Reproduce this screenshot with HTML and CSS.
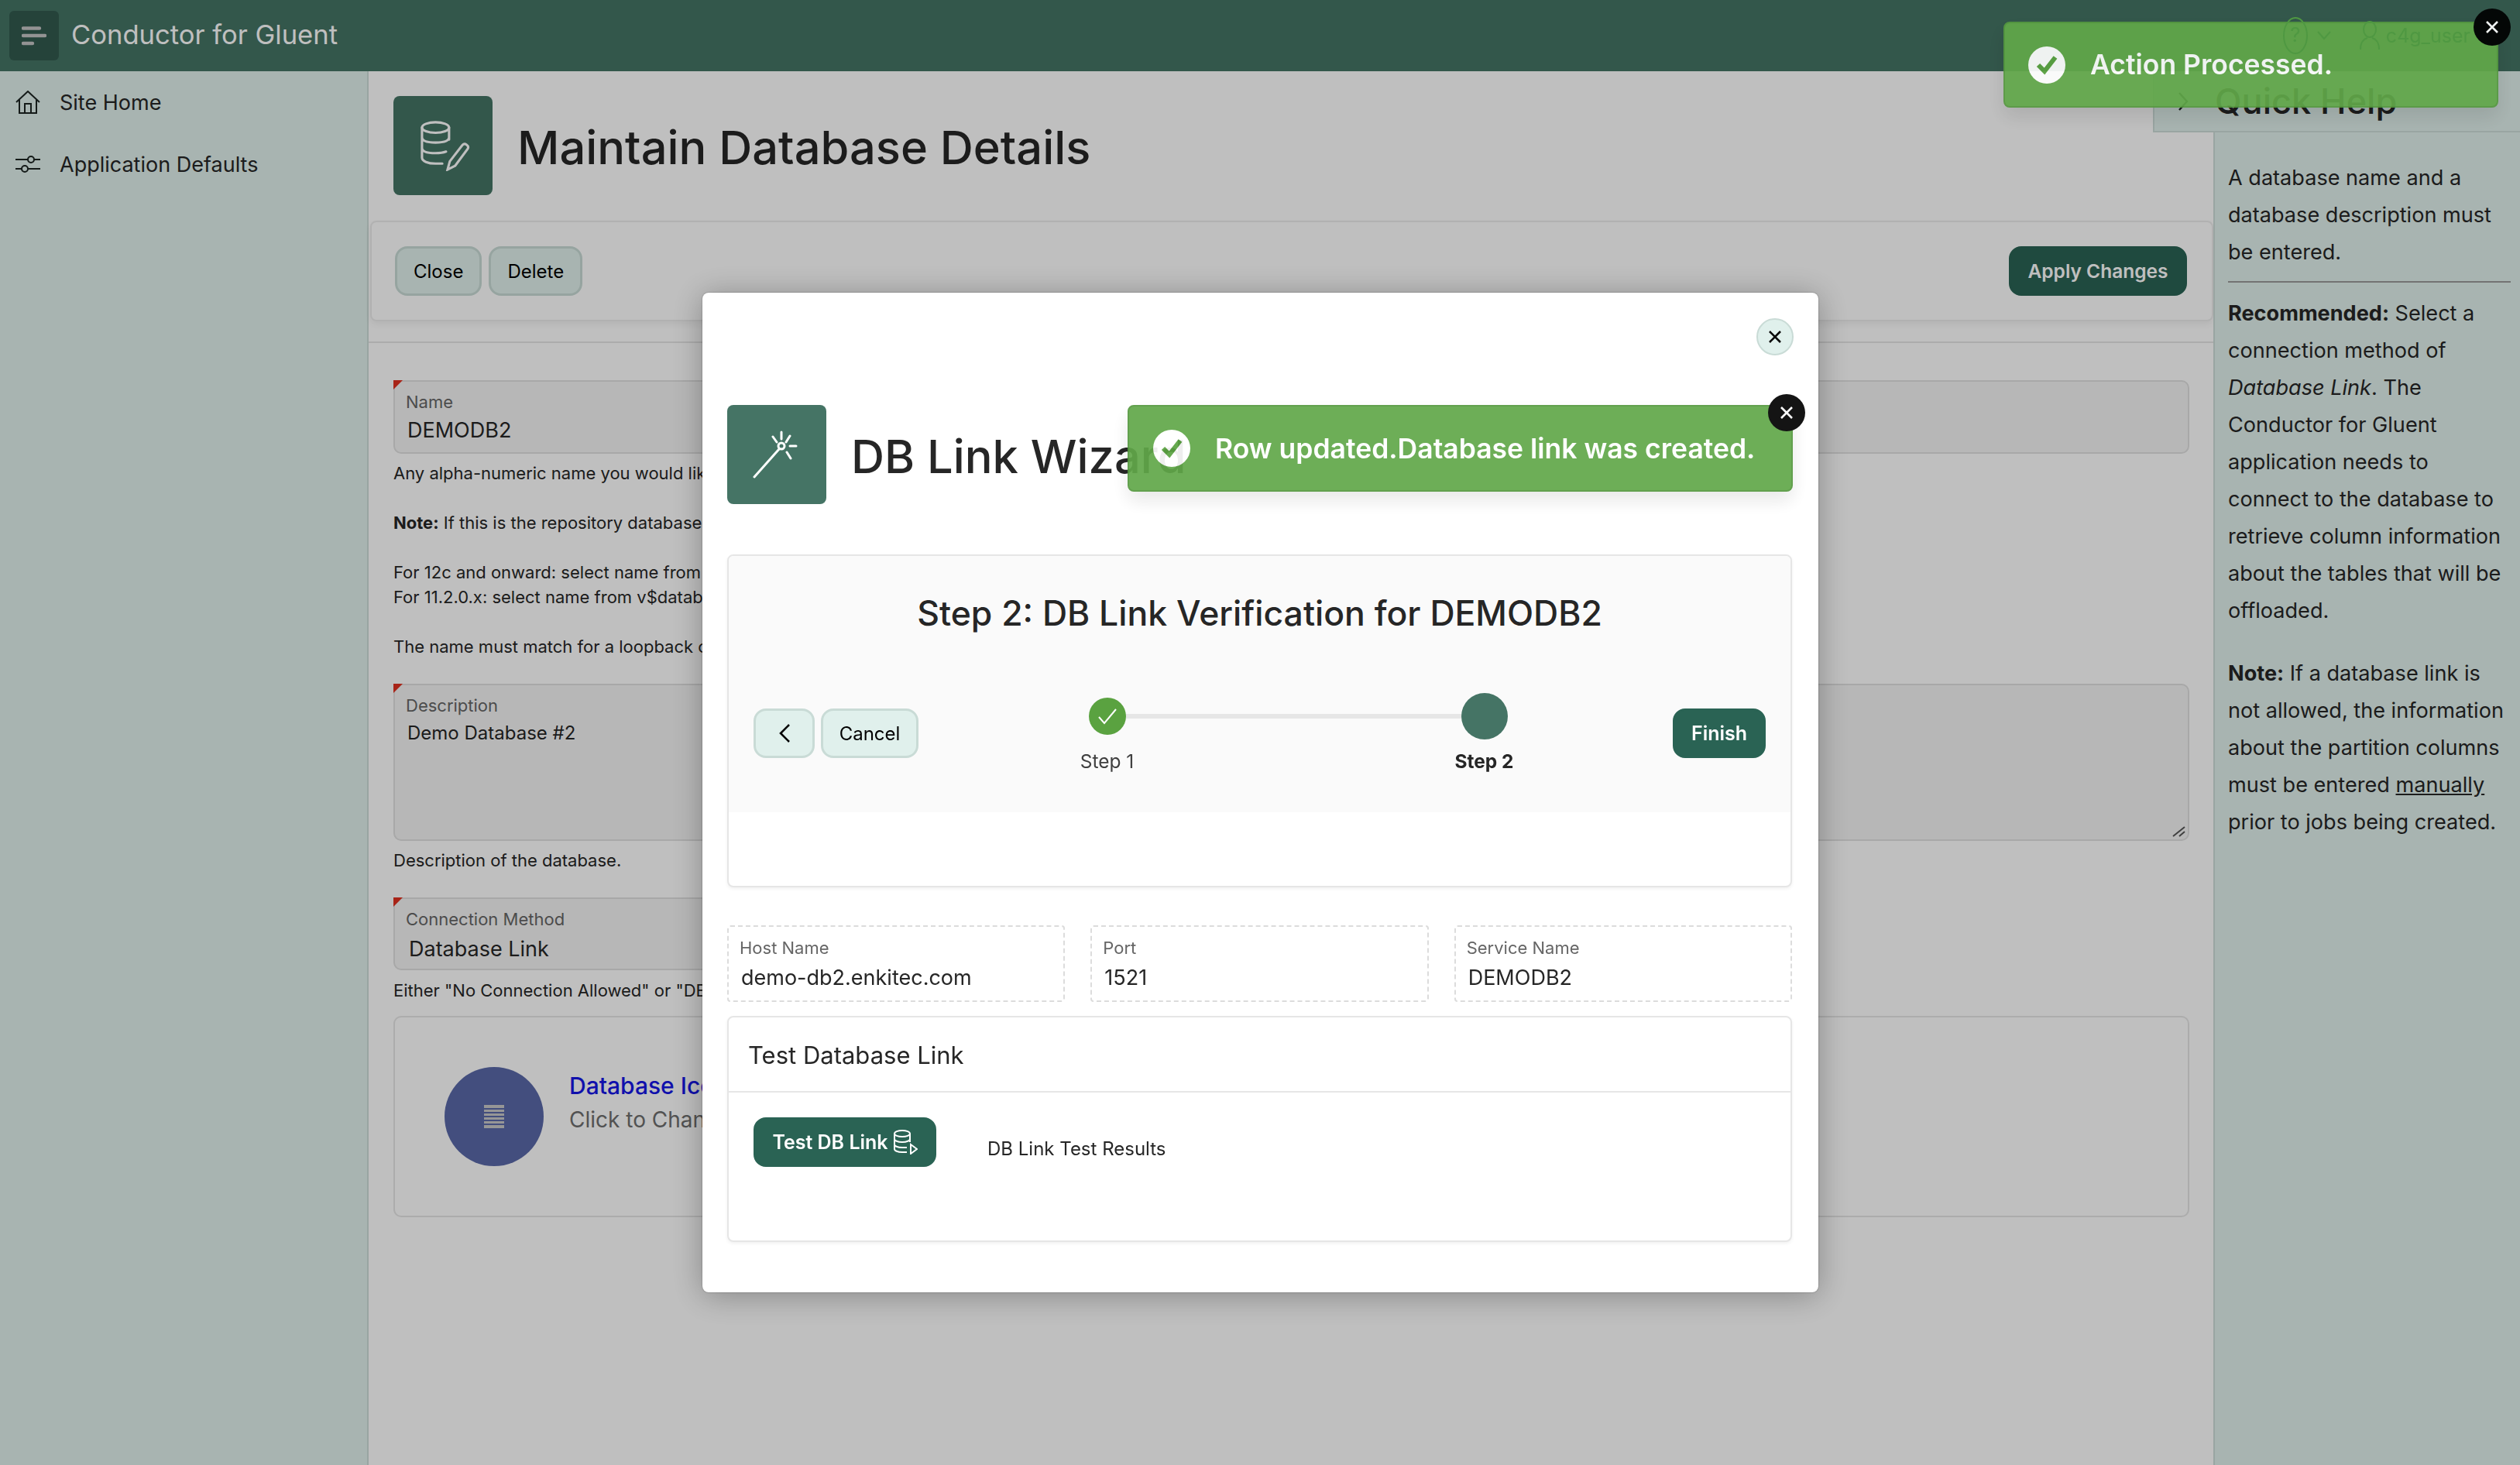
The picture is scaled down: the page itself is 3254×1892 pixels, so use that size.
FILE: index.html
```html
<!DOCTYPE html>
<html lang="en">
<head>
<meta charset="utf-8">
<title>Maintain Database Details</title>
<link rel="stylesheet" href="styles.css">
</head>
<body>
<div class="app">
  <header class="topbar">
    <button class="burger" aria-label="Menu"><svg width="32" height="32" viewBox="0 0 32 32"><path d="M2 6.5h21M2 16h28M2 26h12" stroke="#c4c4c4" stroke-width="4.4" stroke-linecap="round" fill="none"/></svg></button>
    <div class="brand">Conductor for Gluent</div>
    <div class="topbar-right">
      <svg class="help-ico" width="34" height="50" viewBox="0 0 34 50" fill="none" stroke="#4f9842" stroke-width="2"><ellipse cx="17" cy="25" rx="15" ry="23"/><text x="17" y="33" text-anchor="middle" fill="#4f9842" stroke="none" class="help-q">?</text></svg>
      <svg class="help-caret" width="20" height="14" viewBox="0 0 20 14" fill="none" stroke="#4f9842" stroke-width="2"><path d="M2 2l8 9 8-9"/></svg>
      <svg class="user-ico" width="26" height="38" viewBox="0 0 26 38" fill="none" stroke="#4f9842" stroke-width="2"><ellipse cx="13" cy="11" rx="8" ry="10"/><path d="M1 37c0-10 5-14 9-15M25 37c0-10-5-14-9-15"/></svg>
      <span class="user-name">c4g_user</span>
    </div>
  </header>
  <div class="layout">
    <nav class="sidebar">
      <a class="nav-item"><svg width="32" height="30" viewBox="0 0 32 30" fill="none" stroke="#1c2422" stroke-width="2"><path d="M1 15L16 1l15 14M5 12v17h22V12M12 29V17h8v12"/></svg><span>Site Home</span></a>
      <a class="nav-item"><svg width="32" height="26" viewBox="0 0 32 26" fill="none" stroke="#1c2422" stroke-width="2"><path d="M0 7h16M24 7h8M0 19h8M16 19h16"/><circle cx="20" cy="7" r="4"/><circle cx="12" cy="19" r="4"/></svg><span>Application Defaults</span></a>
    </nav>
    <main class="content">
      <div class="page-head">
        <div class="tile tile-dark">
          <svg class="tile-ico" width="66" height="66" viewBox="0 0 68 66" fill="none" stroke="#fff" stroke-width="3.2" stroke-linecap="round"><ellipse cx="21" cy="9" rx="18" ry="7"/><path d="M3 9v40c0 5 8 8 18 8h9M39 9v16M3 22c0 5 8 7 18 7s18-2 18-7M3 36c0 5 8 7 18 7 5 0 10-.5 14-2"/><path d="M47 60l-10 5 3-11 17-22c3-3 9 1 7 5z"/></svg>
        </div>
        <h1 class="page-title">Maintain Database Details</h1>
      </div>
      <div class="toolbar">
        <button class="btn">Close</button>
        <button class="btn">Delete</button>
        <span class="spacer"></span>
        <button class="btn btn-primary">Apply Changes</button>
      </div>
      <div class="form">
        <div class="field field-name">
          <label>Name</label>
          <div class="value">DEMODB2</div>
        </div>
        <div class="help-block">Any alpha-numeric name you would like to use.<br><br><b>Note:</b> If this is the repository database<br><br>For 12c and onward: select name from v$pdbs<br>For 11.2.0.x: select name from v$database<br><br>The name must match for a loopback connection.</div>
        <div class="field field-desc">
          <label>Description</label>
          <div class="value">Demo Database #2</div>
          <svg class="grip" width="18" height="14" viewBox="0 0 18 14" stroke="#555" stroke-width="2"><path d="M2 13L17 1M10 13l7-6"/></svg>
        </div>
        <div class="help-block help-short">Description of the database.</div>
        <div class="field field-conn">
          <label>Connection Method</label>
          <div class="value value-sel">Database Link</div>
        </div>
        <div class="help-block help-tight">Either "No Connection Allowed" or "DB Link".</div>
        <div class="icon-card">
          <div class="db-circle"><svg width="26" height="30" viewBox="0 0 26 30" fill="#c8c8c8"><path d="M0 0h26v4H0zM0 6h26v3H0zM0 11h26v3H0zM0 16h26v3H0zM0 21h26v3H0zM0 26h26v4H0z"/></svg></div>
          <div class="icon-text">
            <a class="icon-link">Database Icon</a>
            <div class="icon-sub">Click to Change</div>
          </div>
        </div>
      </div>
    </main>
    <aside class="quick">
      <div class="quick-head">
        <svg width="14" height="26" viewBox="0 0 14 26" fill="none" stroke="#1c2422" stroke-width="2.4"><path d="M2 2l10 11L2 24"/></svg>
        <h2>Quick Help</h2>
      </div>
      <div class="quick-body">
        <p>A database name and a database description must be entered.</p>
        <hr>
        <p><b>Recommended:</b> Select a connection method of <i>Database Link</i>. The Conductor for Gluent application needs to connect to the database to retrieve column information about the tables that will be offloaded.</p>
        <p class="quick-note"><b>Note:</b> If a database link is not allowed, the information about the partition columns must be entered <u>manually</u> prior to jobs being created.</p>
      </div>
    </aside>
  </div>
</div>

<div class="scrim"></div>

<section class="modal">
  <button class="modal-close" aria-label="Close"><svg width="18" height="18" viewBox="0 0 18 18" stroke="#000" stroke-width="2.6"><path d="M2 2l14 14M16 2L2 16"/></svg></button>
  <div class="wiz-head">
    <div class="tile tile-mid">
      <svg width="62" height="62" viewBox="0 0 62 62" fill="none" stroke="#fff" stroke-width="3" stroke-linecap="round"><path d="M2 60l32-36"/><circle cx="37" cy="20" r="4"/><path d="M37 2v9M48 20h8M26 8l5 7M48 7l-5 8M44 28l5 8"/></svg>
    </div>
    <h1 class="page-title">DB Link Wizard</h1>
  </div>
  <div class="wiz-card">
    <div class="wiz-top">
      <h2 class="wiz-title">Step 2: DB Link Verification for DEMODB2</h2>
      <div class="wiz-row">
        <div class="wiz-btns">
          <button class="btn btn-light btn-back"><svg width="16" height="26" viewBox="0 0 16 26" fill="none" stroke="#000" stroke-width="2.6"><path d="M14 2L3 13l11 11"/></svg></button>
          <button class="btn btn-light btn-cancel">Cancel</button>
        </div>
        <div class="stepper">
          <div class="step step-done">
            <div class="step-slot"><span class="dot dot-done"><svg width="26" height="22" viewBox="0 0 26 22" fill="none" stroke="#fff" stroke-width="2"><path d="M2 12l7 8L24 2"/></svg></span></div>
            <div class="step-label">Step 1</div>
          </div>
          <div class="step">
            <div class="step-slot"><span class="dot dot-active"></span></div>
            <div class="step-label step-label-on">Step 2</div>
          </div>
        </div>
        <button class="btn btn-green">Finish</button>
      </div>
    </div>
  </div>
  <div class="ro-row">
    <div class="ro-field"><label>Host Name</label><div class="value">demo-db2.enkitec.com</div></div>
    <div class="ro-field"><label>Port</label><div class="value">1521</div></div>
    <div class="ro-field"><label>Service Name</label><div class="value">DEMODB2</div></div>
  </div>
  <div class="test-card">
    <div class="test-head">Test Database Link</div>
    <div class="test-body">
      <button class="btn btn-green btn-test">Test DB Link
        <svg width="32" height="32" viewBox="0 0 32 32" fill="none" stroke="#fff" stroke-width="2"><ellipse cx="12" cy="5" rx="10" ry="4"/><path d="M2 5v20c0 2 4 4 10 4h6M22 5v11M2 12c0 2 4 4 10 4s10-2 10-4M2 19c0 2 4 4 10 4h6"/><path d="M23 19l8 6-8 6z"/></svg>
      </button>
      <span class="test-result">DB Link Test Results</span>
    </div>
  </div>
</section>

<div class="toast toast-top">
  <span class="toast-check"><svg width="30" height="26" viewBox="0 0 30 26" fill="none" stroke="#5aa240" stroke-width="6"><path d="M4 13l8 8L26 3"/></svg></span>
  <span class="toast-text">Action Processed.</span>
  <button class="toast-close" aria-label="Dismiss"><svg width="18" height="18" viewBox="0 0 18 18" stroke="#fff" stroke-width="2.6"><path d="M2 2l14 14M16 2L2 16"/></svg></button>
</div>
<div class="toast toast-modal">
  <span class="toast-check"><svg width="30" height="26" viewBox="0 0 30 26" fill="none" stroke="#5aa240" stroke-width="6"><path d="M4 13l8 8L26 3"/></svg></span>
  <span class="toast-text">Row updated.Database link was created.</span>
  <button class="toast-close" aria-label="Dismiss"><svg width="18" height="18" viewBox="0 0 18 18" stroke="#fff" stroke-width="2.6"><path d="M2 2l14 14M16 2L2 16"/></svg></button>
</div>
</body>
</html>
```
FILE: styles.css
```css
* { box-sizing: border-box; }
html, body { margin: 0; height: 100%; }
body { font-family: Inter, "Noto Sans", sans-serif; color: #262626; background: #fff; overflow: hidden; }
button { font-family: inherit; }
h1, h2, p { margin: 0; font-weight: 400; }

.app { display: flex; flex-direction: column; height: 1892px; }

.topbar { height: 92px; flex: none; display: flex; align-items: center; padding-left: 12px; background: #457465; color: #fff; }
.burger { width: 64px; height: 64px; padding: 0 0 0 16px; border: 0; border-radius: 6px; background: #325a4e; display: flex; align-items: center; }
.brand { margin: -4px 0 0 16px; font-size: 34.6px; }
.topbar-right { position: relative; z-index: 4; margin-left: auto; display: flex; align-items: center; margin-right: 64px; }
.help-q { font-size: 26px; font-family: Inter, sans-serif; }
.help-caret { margin-left: 10px; }
.user-ico { margin-left: 36px; }
.user-name { margin-left: 8px; font-size: 25px; color: #4f9842; }

.layout { flex: 1; display: flex; min-height: 0; }

.sidebar { width: 476px; flex: none; padding-top: 16px; background: #e0f0ec; border-right: 2px solid #cddcd8; }
.nav-item { height: 48px; margin-bottom: 32px; padding-left: 20px; display: flex; align-items: center; gap: 25px; font-size: 27px; color: #262626; }

.content { flex: 1; min-width: 0; display: flex; flex-direction: column; background: #fff; }
.page-head { display: flex; align-items: center; gap: 32px; padding: 32px 0 0 32px; }
.tile { width: 128px; height: 128px; flex: none; display: flex; align-items: center; justify-content: center; border-radius: 8px; }
.tile-dark { background: #457465; }
.tile-mid { background: #457465; }
.tile-ico { margin-left: 6px; }
.page-title { position: relative; top: 2px; font-size: 59.6px; line-height: 72px; font-weight: 450; color: #262626; }

.toolbar { height: 130px; margin: 33px 0 0 2px; padding: 0 32px 0 30px; display: flex; align-items: center; gap: 9px; background: #fff; border: 2px solid #ededed; border-radius: 8px; box-shadow: 0 4px 8px rgba(0,0,0,.06); }
.spacer { flex: 1; }

.btn { height: 64px; padding: 0 21px; font-size: 24px; font-weight: 400; color: #000; background: #e0f0ec; border: 3px solid #c9dbd6; border-radius: 16px; }
.btn-primary { width: 230px; padding: 0; font-size: 24.5px; font-weight: 600; color: #fff; background: #2a6354; border-color: #2a6354; }
.btn-light { background: #e0f0ec; }
.btn-back { width: 79px; padding: 0; display: flex; align-items: center; justify-content: center; }
.btn-cancel { width: 126px; padding: 0; }
.btn-green { font-size: 25px; font-weight: 600; color: #fff; background: #2a6354; border-color: #2a6354; }

.form { margin-top: 26px; padding: 48px 31px 0 32px; border-top: 2px solid #e6e6e6; }
.field { position: relative; padding: 12px 15px 0 14px; background: #f5f5f5; border: 2px solid #e0e0e0; border-radius: 10px; }
.field::before { content: ""; position: absolute; left: -2px; top: -2px; border-top: 12px solid #e03020; border-right: 12px solid transparent; border-bottom: 0; }
.field label { display: block; font-size: 22px; line-height: 28px; color: #666; }
.field .value { margin-top: 5px; padding-left: 2px; font-size: 27px; line-height: 36px; color: #262626; }
.field-name { height: 95px; }
.field-desc { height: 203px; }
.field-desc .value { margin-top: 4px; font-size: 24px; }
.field-conn { width: 1400px; height: 94px; }
.field-conn .value { margin-top: 7px; padding-left: 4px; }
.grip { position: absolute; right: 3px; bottom: 3px; }

.help-block { margin-top: 9px; font-size: 22px; line-height: 32px; color: #262626; white-space: nowrap; }
.help-block b { font-weight: 700; }
.help-block + .field { margin-top: 32px; }
.help-short { margin-top: 9px; }
.help-short + .field { margin-top: 32px; }
.help-tight { margin-top: 10px; }

.icon-card { height: 260px; margin-top: 17px; padding-left: 64px; display: flex; align-items: center; background: #fff; border: 2px solid #e6e6e6; border-radius: 10px; }
.db-circle { width: 128px; height: 128px; display: flex; align-items: center; justify-content: center; border-radius: 50%; background: #5a69a8; }
.icon-text { margin-left: 33px; padding-bottom: 36px; }
.icon-link { display: block; font-size: 30px; line-height: 44px; font-weight: 500; color: #1616e6; }
.icon-sub { font-size: 28px; line-height: 44px; color: #6e6e6e; }

.quick { width: 396px; flex: none; background: #e0f0ec; border-left: 2px solid #cddcd8; }
.quick-head { height: 79px; margin-left: -80px; padding-left: 30px; display: flex; align-items: center; gap: 34px; background: #e0f0ec; border-left: 2px solid #cddcd8; border-bottom: 2px solid #cddcd8; }
.quick-head h2 { font-size: 45px; font-weight: 500; color: #262626; }
.quick-body { padding: 35px 12px 0 17px; font-size: 27.1px; line-height: 48px; color: #262626; }
.quick-body hr { height: 2px; margin: 13px 0 16px; border: 0; background: #9a9a9a; }
.quick-note { margin-top: 33px; }

.scrim { position: fixed; z-index: 1; inset: 0; background: rgba(0,0,0,.25); }

.modal { position: fixed; z-index: 2; left: 907px; top: 378px; width: 1441px; height: 1291px; padding: 33px 34px 0 32px; display: flex; flex-direction: column; background: #fff; border-radius: 8px; box-shadow: 0 0 2px rgba(0,0,0,.4), 0 4px 40px rgba(0,0,0,.3); }
.modal-close { align-self: flex-end; width: 48px; height: 48px; margin-right: -2px; padding: 0; display: flex; align-items: center; justify-content: center; background: #e0f0ec; border: 2px solid #c9dbd6; border-radius: 50%; }
.wiz-head { margin-top: 64px; display: flex; align-items: center; gap: 32px; }

.wiz-card { height: 430px; margin-top: 65px; background: #fff; border: 2px solid #e6e6e6; border-radius: 8px; box-shadow: 0 2px 4px rgba(0,0,0,.06); overflow: hidden; }
.wiz-top { height: 331px; padding: 44px 32px 0 32px; background: #fafafa; }
.wiz-title { font-size: 44.5px; line-height: 60px; font-weight: 450; text-align: center; color: #262626; }
.wiz-row { margin-top: 73px; display: flex; align-items: flex-start; }
.wiz-btns { margin-top: 20px; display: flex; gap: 8px; }
.wiz-row > .btn-green { margin-top: 20px; width: 120px; padding: 0; }

.stepper { flex: 1; display: flex; }
.step { position: relative; flex: 1; display: flex; flex-direction: column; align-items: center; }
.step-done::after { content: ""; position: absolute; left: 50%; top: 27px; width: 100%; height: 6px; background: #e6e6e6; }
.step-slot { position: relative; z-index: 1; height: 60px; display: flex; align-items: center; }
.dot { display: flex; align-items: center; justify-content: center; border-radius: 50%; }
.dot-done { width: 48px; height: 48px; background: #5aa240; }
.dot-active { width: 60px; height: 60px; background: #457465; }
.step-label { margin-top: 12px; font-size: 24.5px; line-height: 32px; color: #404040; }
.step-label-on { font-weight: 700; color: #262626; }

.ro-row { margin-top: 49px; display: flex; gap: 33px; }
.ro-field { flex: 1; height: 99px; padding: 13px 14px 0 14px; border: 2px dashed #dcdcdc; border-radius: 4px; }
.ro-field label { display: block; font-size: 22px; line-height: 28px; color: #666; }
.ro-field .value { margin-top: 7px; padding-left: 2px; font-size: 27px; line-height: 36px; color: #262626; }

.test-card { height: 292px; margin-top: 18px; background: #fff; border: 2px solid #e6e6e6; border-radius: 8px; box-shadow: 0 2px 4px rgba(0,0,0,.06); }
.test-head { height: 97px; padding: 2px 0 0 25px; display: flex; align-items: center; font-size: 31px; color: #262626; border-bottom: 2px solid #e6e6e6; }
.test-body { padding: 32px 0 0 32px; display: flex; align-items: flex-start; }
.btn-test { width: 236px; padding: 0; display: flex; align-items: center; justify-content: center; gap: 6px; }
.test-result { margin: 27px 0 0 66px; font-size: 24px; line-height: 28px; }

.toast { position: fixed; z-index: 3; display: flex; align-items: center; color: #fff; background: #61a849; border: 2px solid #55983f; border-radius: 8px; opacity: .92; box-shadow: 0 12px 24px rgba(0,0,0,.1); }
.toast-top { left: 2587px; top: 28px; width: 639px; height: 111px; padding: 0 0 0 30px; }
.toast-modal { left: 1456px; top: 523px; width: 859px; height: 112px; padding: 0 0 0 31px; }
.toast-check { width: 48px; height: 48px; flex: none; display: flex; align-items: center; justify-content: center; border-radius: 50%; background: #fff; }
.toast-text { margin-left: 32px; font-size: 35.5px; font-weight: 600; }
.toast-close { position: absolute; width: 48px; height: 48px; padding: 0; display: flex; align-items: center; justify-content: center; background: #000; border: 0; border-radius: 50%; }
.toast-top .toast-close { right: -18px; top: -19px; }
.toast-modal .toast-close { right: -18px; top: -16px; }
```
